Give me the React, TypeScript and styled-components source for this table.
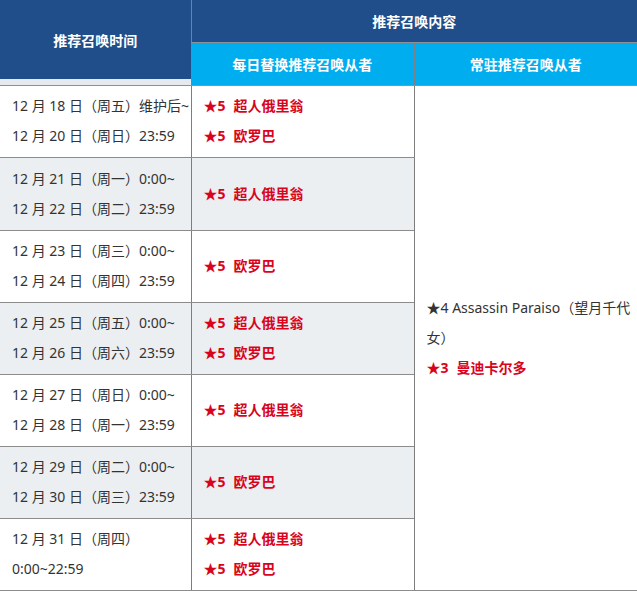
import { ReactElement } from 'react';
import styled, { createGlobalStyle } from 'styled-components';

const GlobalStyle = createGlobalStyle`
  html, body {
    margin: 0;
    padding: 0;
    background: #fff;
  }
  body {
    font-family: 'Noto Sans', 'Noto Sans CJK SC', sans-serif;
    font-size: 14px;
    color: #333;
  }
`;

const Table = styled.table`
  width: 637px;
  table-layout: fixed;
  border-collapse: collapse;
`;

const HeadCell = styled.th<{ $light?: boolean }>`
  height: 42px;
  padding: 0;
  background: ${({ $light }) => ($light ? '#00adee' : '#1f4e8b')};
  color: #fff;
  font-weight: 700;
  font-size: 14px;
  text-align: center;
  vertical-align: middle;
  border-left: 1px solid #7b7f86;
  border-bottom: 1px solid #8a9097;
  &:first-child {
    border-left: none;
  }
`;

const TimeHead = styled(HeadCell)`
  border-left: none;
  padding-bottom: 6px;
  box-shadow: inset 0 -6px 0 #e6eaee;
`;

const Cell = styled.td<{ $striped?: boolean; $tall?: boolean }>`
  padding: ${({ $tall }) => ($tall ? '6px 12px 6px' : '5px 12px 6px')};
  line-height: 30px;
  vertical-align: middle;
  background: ${({ $striped }) => ($striped ? '#ebeff2' : '#fff')};
  border-left: 1px solid #7d7d7d;
  border-bottom: 1px solid #8c8c8c;
  white-space: nowrap;
  &:first-child {
    border-left: none;
  }
`;

const WrapCell = styled(Cell)`
  white-space: normal;
  background: #fff;
  padding: 0 4px 0 12px;
`;

const Line = styled.div``;

const Servant = styled.div`
  color: #d9041c;
  font-weight: 700;
`;

const Rarity = styled.span`
  margin-right: 8px;
`;

interface Row {
  from: string;
  to: string;
  servants: string[];
}

const rows: Row[] = [
  { from: '12 月 18 日（周五）维护后~', to: '12 月 20 日（周日）23:59', servants: ['超人俄里翁', '欧罗巴'] },
  { from: '12 月 21 日（周一）0:00~', to: '12 月 22 日（周二）23:59', servants: ['超人俄里翁'] },
  { from: '12 月 23 日（周三）0:00~', to: '12 月 24 日（周四）23:59', servants: ['欧罗巴'] },
  { from: '12 月 25 日（周五）0:00~', to: '12 月 26 日（周六）23:59', servants: ['超人俄里翁', '欧罗巴'] },
  { from: '12 月 27 日（周日）0:00~', to: '12 月 28 日（周一）23:59', servants: ['超人俄里翁'] },
  { from: '12 月 29 日（周二）0:00~', to: '12 月 30 日（周三）23:59', servants: ['欧罗巴'] },
  { from: '12 月 31 日（周四）', to: '0:00~22:59', servants: ['超人俄里翁', '欧罗巴'] },
];

function App(): ReactElement {
  return (
    <>
      <GlobalStyle />
      <Table>
        <colgroup>
          <col style={{ width: 191 }} />
          <col style={{ width: 223 }} />
          <col style={{ width: 223 }} />
        </colgroup>
        <thead>
          <tr>
            <TimeHead rowSpan={2}>推荐召唤时间</TimeHead>
            <HeadCell colSpan={2}>推荐召唤内容</HeadCell>
          </tr>
          <tr>
            <HeadCell $light>每日替换推荐召唤从者</HeadCell>
            <HeadCell $light>常驻推荐召唤从者</HeadCell>
          </tr>
        </thead>
        <tbody>
          {rows.map((row, i) => (
            <tr key={row.from}>
              <Cell $striped={i % 2 === 1} $tall={i === 1}>
                <Line>{row.from}</Line>
                <Line>{row.to}</Line>
              </Cell>
              <Cell $striped={i % 2 === 1} $tall={i === 1}>
                {row.servants.map((name) => (
                  <Servant key={name}>
                    <Rarity>★5</Rarity>
                    {name}
                  </Servant>
                ))}
              </Cell>
              {i === 0 && (
                <WrapCell rowSpan={rows.length}>
                  <Line>★4 Assassin Paraiso（望月千代女）</Line>
                  <Servant>
                    <Rarity>★3</Rarity>
                    曼迪卡尔多
                  </Servant>
                </WrapCell>
              )}
            </tr>
          ))}
        </tbody>
      </Table>
    </>
  );
}

export default App;
